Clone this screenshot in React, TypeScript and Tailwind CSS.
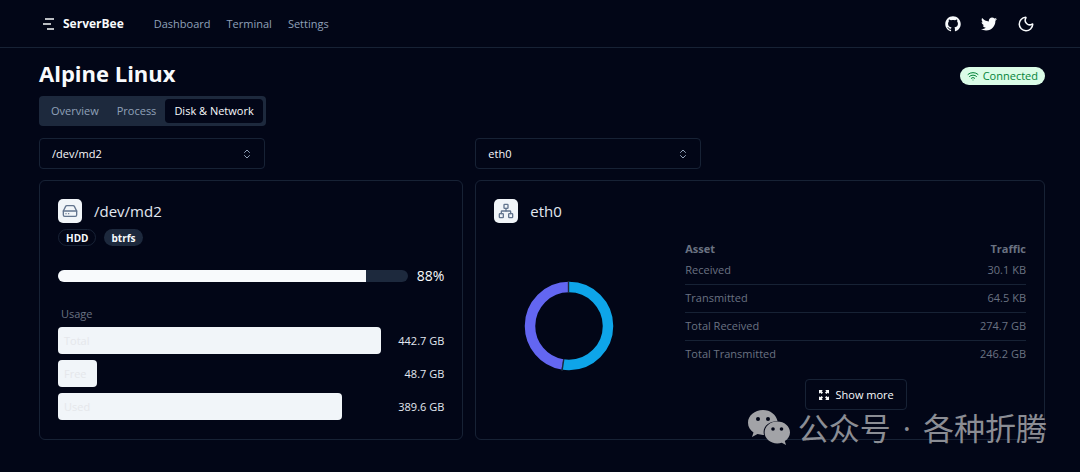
import { useState } from "react";
import type { ReactNode } from "react";
import { ChevronsUpDown, HardDrive, Moon, Network, Wifi } from "lucide-react";
import { FaTwitter } from "react-icons/fa";
import { RxGithubLogo } from "react-icons/rx";

const usage = [
  { label: "Total", value: "442.7 GB", share: 100 },
  { label: "Free", value: "48.7 GB", share: 12 },
  { label: "Used", value: "389.6 GB", share: 88 },
];

const traffic = [
  { asset: "Received", value: "30.1 KB" },
  { asset: "Transmitted", value: "64.5 KB" },
  { asset: "Total Received", value: "274.7 GB" },
  { asset: "Total Transmitted", value: "246.2 GB" },
];

function Logo() {
  return (
    <svg viewBox="0 0 12 12" className="h-3 w-3" fill="none" stroke="currentColor" strokeWidth="1.5">
      <path d="M2 1h9M0 6h8M4 11h7" />
    </svg>
  );
}

function ExpandIcon() {
  return (
    <svg viewBox="0 0 12 12" className="h-3 w-3" fill="currentColor">
      <path d="M1 1h3.800L3.700 2.200 5 3.600 3.600 5 2.200 3.700 1 4.800ZM11 1v3.800L9.800 3.700 8.400 5 7 3.600l1.300-1.400L7.200 1ZM11 11H7.200l1.100-1.200L7 8.400 8.400 7l1.400 1.300L11 7.200ZM1 11V7.200l1.200 1.100L3.600 7 5 8.400 3.700 9.800 4.800 11Z" />
    </svg>
  );
}

function Picker({ label, value }: { label: string; value: string }) {
  return (
    <div className="grid w-[226px] max-w-full items-center">
      <select
        aria-label={label}
        defaultValue={value}
        className="col-start-1 row-start-1 h-[31px] w-full appearance-none rounded border border-slate-800/80 bg-transparent px-3 text-[11px] font-medium text-slate-50"
      >
        <option>{value}</option>
      </select>
      <ChevronsUpDown className="pointer-events-none col-start-1 row-start-1 mr-3 h-3 w-3 justify-self-end text-slate-400" />
    </div>
  );
}

function CardTitle({ icon, children }: { icon: ReactNode; children: ReactNode }) {
  return (
    <div className="flex items-center gap-3">
      <span className="flex h-6 w-6 items-center justify-center rounded-[5px] bg-slate-100 text-slate-500">{icon}</span>
      <h2 className="text-[15px] leading-6 text-slate-200">{children}</h2>
    </div>
  );
}

function Donut() {
  return (
    <svg viewBox="0 0 90 90" className="h-[90px] w-[90px]" fill="none" strokeWidth="10.5">
      <g transform="rotate(-90 45 45)">
        <circle cx="45" cy="45" r="39" stroke="#0ea5e9" pathLength="100" strokeDasharray="52.7 47.3" />
        <circle cx="45" cy="45" r="39" stroke="#6366f1" pathLength="100" strokeDasharray="47.3 52.7" strokeDashoffset="-52.7" />
      </g>
      <path d="M44.500 0v12M38 90l1.800-12" stroke="#1e293b" strokeWidth="1.4" />
    </svg>
  );
}

function WeChat() {
  return (
    <svg viewBox="0 0 42 35" className="h-[35px] w-[42px]">
      <path fill="#a2a3a7" d="M15 0C6.700 0 0 5.600 0 12.700c0 4 2.100 7.500 5.500 9.800L4 27l5.500-2.900c1.800.5 3.600.8 5.500.8h1C13.800 17 21 11 29.600 11.300 28.300 4.800 22.200 0 15 0Z" />
      <path fill="#a2a3a7" d="M42 22.500c0-6-5.700-10.900-12.700-10.900S16.600 16.500 16.600 22.500s5.700 10.900 12.700 10.900c1.600 0 3.100-.3 4.500-.7L38 35l-1.200-3.900c3.200-2 5.200-5.100 5.200-8.600Z" />
      <g fill="#020617">
        <circle cx="10" cy="9" r="2" />
        <circle cx="20" cy="9" r="2" />
        <circle cx="25" cy="19" r="1.800" />
        <circle cx="33.500" cy="19" r="1.800" />
      </g>
    </svg>
  );
}

export default function App() {
  const tabs = ["Overview", "Process", "Disk & Network"];
  const [active, setActive] = useState("Disk & Network");

  return (
    <div className="relative min-h-screen bg-[#020617] font-['Open_Sans','Noto_Sans',sans-serif] text-[11px] leading-4 text-slate-50">
      <header className="flex h-12 items-center border-b border-slate-800/80 pr-[45px] pl-[43px]">
        <a href="#home" className="flex items-center gap-2 text-[12px] font-bold">
          <Logo />
          ServerBee
        </a>
        <nav className="ml-[30px] flex gap-4 text-[11px] text-slate-400">
          <a href="#dashboard">Dashboard</a>
          <a href="#terminal">Terminal</a>
          <a href="#settings">Settings</a>
        </nav>
        <div className="ml-auto flex items-center gap-5">
          <a href="#github" aria-label="GitHub"><RxGithubLogo className="h-4 w-4" /></a>
          <a href="#twitter" aria-label="Twitter"><FaTwitter className="h-4 w-4" /></a>
          <button type="button" aria-label="Toggle theme"><Moon className="h-[18px] w-[18px]" /></button>
        </div>
      </header>

      <main className="pt-[9px] pr-[35px] pb-8 pl-[39px]">
        <div className="flex items-center justify-between">
          <h1 className="text-[22px] leading-8 font-bold">Alpine Linux</h1>
          <span className="mt-1.5 flex h-[18px] items-center gap-1 rounded-full bg-green-100 px-[7px] text-[11px] text-green-700">
            <Wifi className="h-3 w-3" />
            Connected
          </span>
        </div>

        <div role="tablist" className="mt-[7px] flex h-[30px] w-fit items-center rounded bg-slate-800 p-[3px]">
          {tabs.map((tab) => (
            <button
              key={tab}
              type="button"
              role="tab"
              aria-selected={tab === active}
              onClick={() => setActive(tab)}
              className={
                tab === active
                  ? "h-6 rounded-sm bg-slate-950 px-[9px] font-medium text-slate-50"
                  : "h-6 rounded-sm px-[9px] text-slate-400"
              }
            >
              {tab}
            </button>
          ))}
        </div>

        <div className="mt-3 grid grid-cols-7 gap-x-3 gap-y-[11px]">
          <div className="col-span-3"><Picker label="Disk" value="/dev/md2" /></div>
          <div className="col-span-4"><Picker label="Network interface" value="eth0" /></div>

          <section className="col-span-3 rounded-md border border-slate-800/80 px-[18px] pt-[18px] pb-[19px]">
            <CardTitle icon={<HardDrive className="h-4 w-4" strokeWidth={2} />}>/dev/md2</CardTitle>
            <div className="mt-1.5 flex gap-2 text-[10px] font-bold">
              <span className="flex h-[17px] items-center rounded-full border border-slate-800/80 px-[7px]">HDD</span>
              <span className="flex h-[17px] items-center rounded-full bg-slate-800 px-[7px]">btrfs</span>
            </div>
            <div className="mt-[18px] flex items-center gap-[9px]">
              <div role="progressbar" aria-label="Disk usage" aria-valuenow={88} className="h-3 flex-1 overflow-hidden rounded-full bg-slate-800">
                <div className="h-full bg-slate-50" style={{ width: "88%" }} />
              </div>
              <span className="text-[14px] leading-6">88%</span>
            </div>
            <p className="mt-[18px] px-[3px] leading-4 text-gray-500">Usage</p>
            <ul className="mt-[5px] flex flex-col gap-1.5">
              {usage.map((row) => (
                <li key={row.label} className="flex items-center">
                  <div className="flex-1">
                    <div className="flex h-[27px] items-center rounded bg-slate-100 px-1.5 text-gray-200" style={{ width: `${row.share}%` }}>
                      {row.label}
                    </div>
                  </div>
                  <span className="w-[63px] text-right text-slate-200">{row.value}</span>
                </li>
              ))}
            </ul>
          </section>

          <section className="col-span-4 rounded-md border border-slate-800/80 p-[18px]">
            <CardTitle icon={<Network className="h-4 w-4" strokeWidth={2} />}>eth0</CardTitle>
            <div className="mt-[18px] flex gap-[42px]">
              <div className="flex w-[149px] shrink-0 items-start justify-center pt-10">
                <Donut />
              </div>
              <div className="flex-1">
                <table className="w-full text-gray-500">
                  <thead>
                    <tr className="h-4 font-bold">
                      <th className="p-0 text-left">Asset</th>
                      <th className="p-0 text-right">Traffic</th>
                    </tr>
                  </thead>
                  <tbody className="divide-y divide-slate-800/80">
                    {traffic.map((row) => (
                      <tr key={row.asset}>
                        <td className="pt-[5px] pb-1.5">{row.asset}</td>
                        <td className="pt-[5px] pb-1.5 text-right">{row.value}</td>
                      </tr>
                    ))}
                  </tbody>
                </table>
                <button type="button" className="mx-auto mt-[11px] flex h-[31px] items-center gap-1.5 rounded border border-slate-800/80 px-3 font-medium">
                  <ExpandIcon />
                  Show more
                </button>
              </div>
            </div>
          </section>
        </div>
      </main>

      <div className="pointer-events-none absolute right-[33px] bottom-6 flex items-center font-['Noto_Sans_CJK_SC',sans-serif] text-[31px] leading-10 text-[#8b8d94]">
        <WeChat />
        <span className="ml-2">公众号<span className="px-3 font-['Open_Sans',sans-serif]">·</span>各种折腾</span>
      </div>
    </div>
  );
}
